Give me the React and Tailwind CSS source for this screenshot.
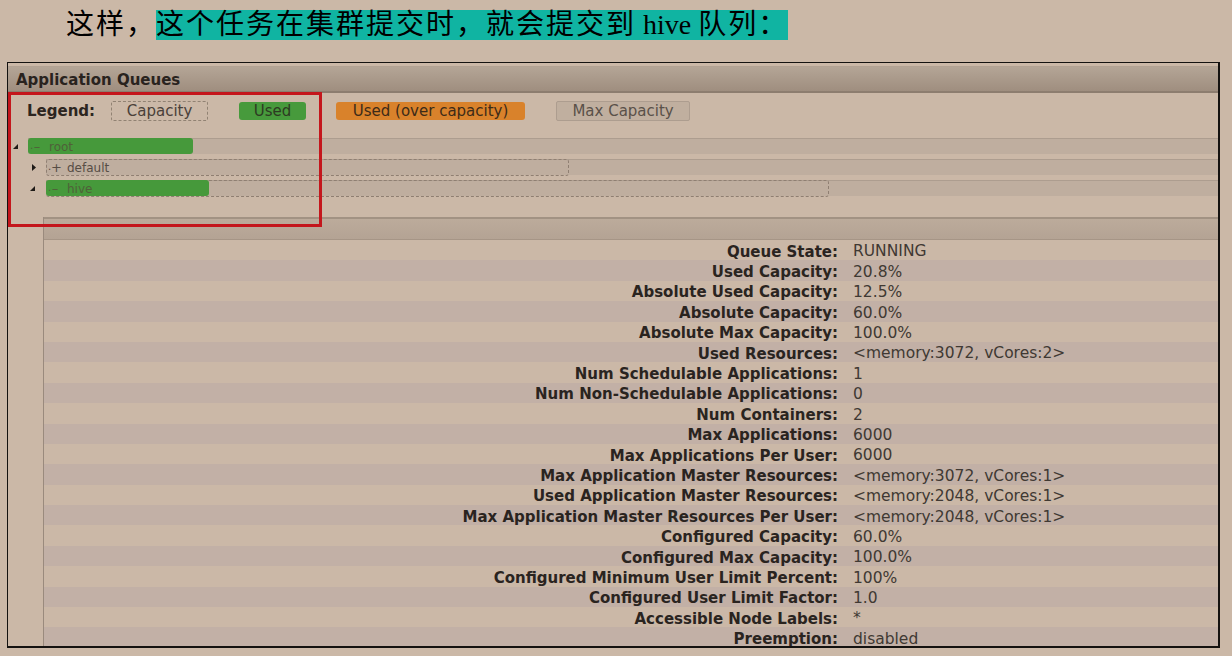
const rows = [
    ['Queue State:', 'RUNNING'],
    ['Used Capacity:', '20.8%'],
    ['Absolute Used Capacity:', '12.5%'],
    ['Absolute Capacity:', '60.0%'],
    ['Absolute Max Capacity:', '100.0%'],
    ['Used Resources:', '<memory:3072, vCores:2>'],
    ['Num Schedulable Applications:', '1'],
    ['Num Non-Schedulable Applications:', '0'],
    ['Num Containers:', '2'],
    ['Max Applications:', '6000'],
    ['Max Applications Per User:', '6000'],
    ['Max Application Master Resources:', '<memory:3072, vCores:1>'],
    ['Used Application Master Resources:', '<memory:2048, vCores:1>'],
    ['Max Application Master Resources Per User:', '<memory:2048, vCores:1>'],
    ['Configured Capacity:', '60.0%'],
    ['Configured Max Capacity:', '100.0%'],
    ['Configured Minimum User Limit Percent:', '100%'],
    ['Configured User Limit Factor:', '1.0'],
    ['Accessible Node Labels:', '*'],
    ['Preemption:', 'disabled'],
];

const OpenIcon = () => (
    <svg width="5" height="5" viewBox="0 0 5 5" className="block">
        <polygon points="5,0 5,5 0,5" fill="#1e1a17" />
    </svg>
);

const ClosedIcon = () => (
    <svg width="4" height="7" viewBox="0 0 4 7" className="block">
        <polygon points="0,0 4,3.5 0,7" fill="#1e1a17" />
    </svg>
);

const QueueBar = ({ name, sign, capacity, used }) => (
    <div className="relative flex-1 h-[16px] bg-[#bfae9f] border-t border-[#ad9d8f]">
        {capacity && (
            <div
                className="absolute left-0 -top-px h-[17px] border border-dashed border-[#8f7f72] rounded-[3px]"
                style={{ width: capacity }}
            />
        )}
        {used && (
            <div
                className="absolute left-0 -top-px h-[16px] bg-[#46993b] rounded-[3px]"
                style={{ width: used }}
            />
        )}
        <div className={`absolute left-[2px] inset-y-0 flex items-center text-[12px] leading-none ${used ? 'text-[#4f6139]' : 'text-[#574d45]'}`}>
            <span className="w-[3px] text-[10px] self-end mb-[3px]">.</span>
            <span className="w-[8px] text-center text-[13px]">{sign}</span>
            <span className="ml-[8px]">{name}</span>
        </div>
    </div>
);

export default function App() {
    return (
        <div className="relative w-[1232px] h-[656px] overflow-hidden bg-[#cbb8a7] font-['DejaVu_Sans',sans-serif]">
            <div className="pt-[10px] pl-[66px] h-[40px] text-[28px] leading-[30px] tracking-[2px] text-black font-['Liberation_Serif','Noto_Sans_CJK_SC',serif] whitespace-nowrap">
                <span className="inline-block h-[30px]">这样，</span>
                <span className="inline-block h-[30px] bg-[#10b4a2]">
                    这个任务在集群提交时，就会提交到<span className="tracking-normal"> hive </span>队列：
                </span>
            </div>

            <div className="ml-[7px] mt-[22px] w-[1213px] h-[586px] border-t border-l border-r-2 border-b-2 border-[#141210] overflow-hidden">
                <div className="h-[4px] border-b border-[#b2a293]" />
                <div className="h-[26px] flex items-center pt-[3px] pl-[8px] bg-linear-to-b from-[#b4a596] to-[#9f8e7f] border-b-2 border-[#8d7d6f] text-[15px] font-bold text-[#29231e]">
                    Application Queues
                </div>

                <div className="flex items-center pt-[9px] h-[27px] text-[15px] whitespace-nowrap">
                    <span className="ml-[19px] font-bold text-[#2c2520]">Legend:</span>
                    <span className="ml-[16px] w-[97px] h-[20px] flex items-center justify-center border border-dashed border-[#918273] rounded-[2px] text-[#4a4039]">
                        Capacity
                    </span>
                    <span className="ml-[31px] w-[67px] h-[18px] flex items-center justify-center bg-[#479a3c] rounded-[3px] text-[#2d3a22]">
                        Used
                    </span>
                    <span className="ml-[30px] w-[189px] h-[18px] flex items-center justify-center bg-[#d9822b] rounded-[3px] text-[#3d2b18]">
                        Used (over capacity)
                    </span>
                    <span className="ml-[31px] w-[134px] h-[20px] flex items-center justify-center bg-[#c0af9f] border border-[#ad9d8f] rounded-[2px] text-[#5a5149]">
                        Max Capacity
                    </span>
                </div>

                <div className="mt-[18px]">
                    <div className="flex h-[21px]">
                        <div className="w-[20px] pl-[5px] pt-[6px]"><OpenIcon /></div>
                        <QueueBar name="root" sign="–" used="165px" />
                    </div>
                    <div className="flex h-[21px]">
                        <div className="w-[38px] pl-[24px] pt-[5px]"><ClosedIcon /></div>
                        <QueueBar name="default" sign="+" capacity="523px" />
                    </div>
                    <div className="flex h-[21px]">
                        <div className="w-[38px] pl-[22px] pt-[6px]"><OpenIcon /></div>
                        <QueueBar name="hive" sign="–" capacity="783px" used="163px" />
                    </div>
                </div>

                <div className="mt-[16px] ml-[35px] border-l border-[#9a8a7d]">
                    <div className="h-[23px] border-t-2 border-[#a29283] border-b border-b-[#a69586] bg-linear-to-b from-[#bcab9b] to-[#b4a394]" />
                    {rows.map(([label, value], i) => (
                        <div
                            key={label}
                            className={`grid grid-cols-[801px_1fr] h-[20.4px] items-center pt-[4px] text-[15px] leading-none whitespace-nowrap ${i % 2 ? 'bg-[#c2b0a6]' : 'bg-[#cbb8a7]'}`}
                        >
                            <span className="text-right pr-[7px] font-bold text-[#2a241f]">{label}</span>
                            <span className="pl-[8px] text-[15.5px] text-[#403933]">{value}</span>
                        </div>
                    ))}
                </div>
            </div>

            <div className="absolute left-[8px] top-[92px] w-[314px] h-[135px] border-[3px] border-[#c4161c]" />
        </div>
    );
}
